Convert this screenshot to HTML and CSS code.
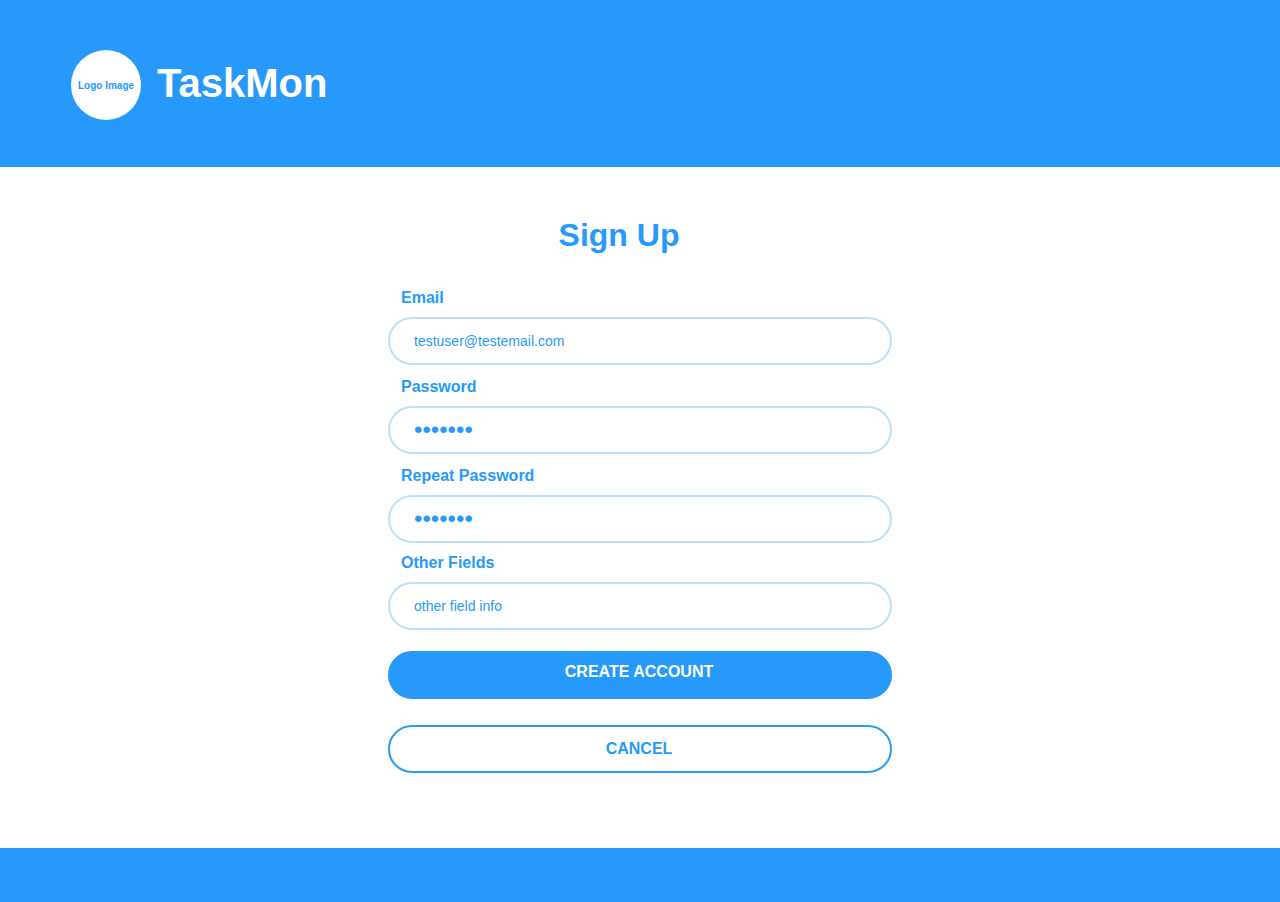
FILE: index.html
```
<!DOCTYPE html>
<html lang="en">
<head>
<meta charset="utf-8">
<meta name="viewport" content="width=device-width, initial-scale=1">
<title>TaskMon</title>
<link rel="stylesheet" href="styles.css">
</head>
<body>
<header class="header">
  <div class="logo">Logo Image</div>
  <div class="brand">TaskMon</div>
</header>
<main class="main">
  <h1 class="title">Sign Up</h1>
  <form class="form">
    <div class="credentials">
      <div class="field">
        <label class="label" for="email">Email</label>
        <input class="input" id="email" type="email" value="testuser@testemail.com">
      </div>
      <div class="field">
        <label class="label" for="password">Password</label>
        <input class="input input-password" id="password" type="password" value="testing">
      </div>
      <div class="field">
        <label class="label" for="repeat">Repeat Password</label>
        <input class="input input-password" id="repeat" type="password" value="testing">
      </div>
    </div>
    <div class="field">
      <label class="label" for="other">Other Fields</label>
      <input class="input" id="other" type="text" value="other field info">
    </div>
    <div class="actions">
      <button class="button button-primary" type="submit">CREATE ACCOUNT</button>
      <button class="button button-outline" type="button">CANCEL</button>
    </div>
  </form>
</main>
<footer class="footer"></footer>
</body>
</html>
```
FILE: styles.css
```
* {
  box-sizing: border-box;
}

body {
  margin: 0;
  min-height: 100vh;
  display: flex;
  flex-direction: column;
  background: #fff;
  color: #2699fb;
  font-family: "Liberation Sans", Arial, sans-serif;
}

.header {
  display: flex;
  align-items: flex-start;
  gap: 16px;
  padding: 50px 71px 47px;
  background: #2699fb;
}

.logo {
  width: 70px;
  height: 70px;
  display: flex;
  align-items: center;
  justify-content: center;
  border-radius: 50%;
  background: #fff;
  font-size: 10px;
  font-weight: bold;
  white-space: nowrap;
}

.brand {
  color: #fff;
  font-size: 40px;
  line-height: 66px;
  font-weight: bold;
}

.main {
  flex: 1;
  padding: 48px 24px;
}

.title {
  margin: 0 auto;
  max-width: 504px;
  padding-right: 42px;
  font-size: 32px;
  line-height: 40px;
  text-align: center;
}

.form {
  max-width: 504px;
  margin: 33px auto 0;
}

.credentials,
.form {
  display: flex;
  flex-direction: column;
}

.credentials {
  gap: 12px;
  margin-bottom: 10px;
}

.field {
  display: flex;
  flex-direction: column;
  gap: 9px;
}

.label {
  padding-left: 13px;
  font-size: 16px;
  line-height: 20px;
  font-weight: bold;
}

.input {
  width: 100%;
  height: 48px;
  padding: 0 24px;
  border: 2px solid #bce0fd;
  border-radius: 24px;
  background: #fff;
  color: #2699fb;
  font-family: inherit;
  font-size: 14px;
}

.input-password {
  font-size: 24px;
}

.actions {
  display: flex;
  flex-direction: column;
  gap: 26px;
  margin-top: 21px;
}

.button {
  height: 48px;
  padding: 0 2px 0 0;
  border: 2px solid #2699fb;
  border-radius: 24px;
  font-family: inherit;
  font-size: 16px;
  font-weight: bold;
}

.button-primary {
  padding-bottom: 6px;
  background: #2699fb;
  color: #fff;
}

.button-outline {
  background: #fff;
  color: #2699fb;
}

.footer {
  height: 54px;
  background: #2699fb;
}
```
